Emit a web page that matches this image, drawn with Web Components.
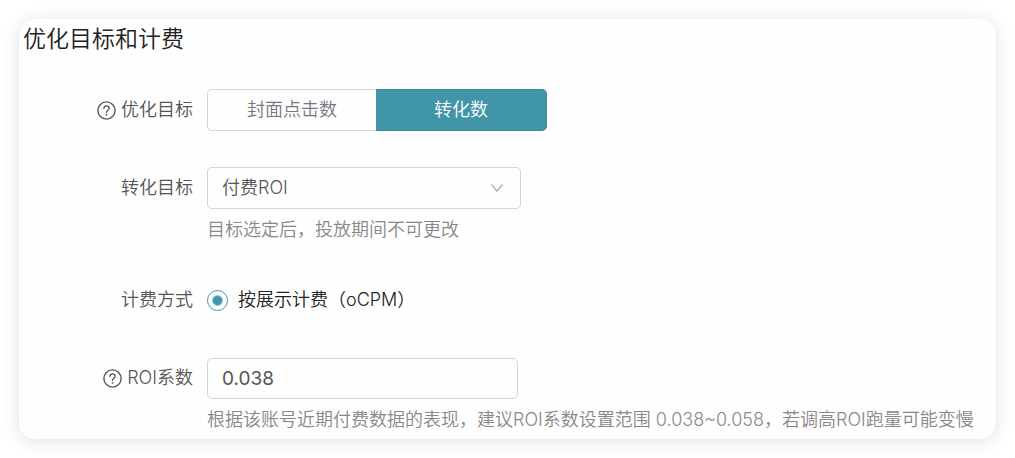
<!DOCTYPE html>
<html lang="zh-CN">
<head>
<meta charset="utf-8">
<meta name="viewport" content="width=device-width, initial-scale=1">
<title>优化目标和计费</title>
<style>
  body {
    margin: 0;
    padding: 19px;
    background: #fff;
    color: #555;
    font: 18px/26px Inter, "Noto Sans CJK SC", sans-serif;
    font-weight: 350;
    --accent: #4096a8;
    --line: #d4d4d4;
    --muted: #888;
  }
</style>
</head>
<body>
<settings-card heading="优化目标和计费">
  <form-row label="优化目标" help>
    <segment-switch options="封面点击数,转化数" selected="1"></segment-switch>
  </form-row>
  <form-row label="转化目标" note="目标选定后，投放期间不可更改">
    <select-box value="付费ROI" label="转化目标"></select-box>
  </form-row>
  <form-row label="计费方式">
    <radio-option name="billing">按展示计费（oCPM）</radio-option>
  </form-row>
  <form-row label="ROI系数" help note="根据该账号近期付费数据的表现，建议ROI系数设置范围 0.038~0.058，若调高ROI跑量可能变慢">
    <text-box value="0.038" label="ROI系数"></text-box>
  </form-row>
</settings-card>

<script>
class Base extends HTMLElement {
  connectedCallback() {
    if (this.shadowRoot) return;
    this.attachShadow({ mode: 'open' }).innerHTML = this.render();
    this.ready();
  }
  ready() {}
}

customElements.define('settings-card', class extends Base {
  render() {
    return `<style>
      :host { display: block; box-sizing: border-box; padding: 4px 4px 6px; border-radius: 16px;
        background: #fefefe; box-shadow: 0 2px 18px rgba(0,0,0,.12); }
      h2 { margin: 0 0 33px; font-size: 23px; line-height: 33px; font-weight: 350; color: #222; }
      .rows { display: grid; gap: 36px; }
    </style>
    <h2>${this.getAttribute('heading')}</h2>
    <div class="rows"><slot></slot></div>`;
  }
});

customElements.define('help-icon', class extends Base {
  render() {
    return `<style>
      :host { display: block; width: 19px; height: 19px; }
      svg { display: block; width: 100%; height: 100%; fill: none; stroke: currentColor; stroke-linecap: round; }
    </style>
    <svg viewBox="0 0 19 19" aria-hidden="true">
      <circle cx="9.5" cy="9.5" r="8.6" stroke-width="1.4"/>
      <path d="M6.9 7.4C6.9 5.8 8 4.9 9.5 4.9s2.6.9 2.6 2.3c0 1.9-2.6 2-2.6 4.1" stroke-width="1.3"/>
      <circle cx="9.5" cy="13.8" r=".9" fill="currentColor" stroke="none"/>
    </svg>`;
  }
});

customElements.define('form-row', class extends Base {
  render() {
    const note = this.getAttribute('note');
    return `<style>
      :host { display: grid; grid-template-columns: 170px minmax(0, 1fr); column-gap: 14px; }
      .label { display: flex; align-items: center; justify-content: flex-end; gap: 5px; height: 42px; }
      .field { display: flex; align-items: center; min-height: 42px; }
      .note { grid-column: 2; margin: 8px 0 0; color: var(--muted); }
    </style>
    <div class="label">${this.hasAttribute('help') ? '<help-icon></help-icon>' : ''}<span>${this.getAttribute('label')}</span></div>
    <div class="field"><slot></slot></div>
    ${note ? `<p class="note">${note}</p>` : ''}`;
  }
});

customElements.define('segment-switch', class extends Base {
  render() {
    const selected = Number(this.getAttribute('selected'));
    const buttons = this.getAttribute('options').split(',').map((text, i) =>
      `<button type="button" aria-pressed="${i === selected}">${text}</button>`).join('');
    return `<style>
      :host { display: grid; grid-template-columns: 169px 171px; }
      button { height: 42px; padding: 0; border: 1px solid var(--line); background: transparent;
        color: #777783; font: inherit; cursor: pointer; }
      button:first-of-type { border-right: 0; border-radius: 5px 0 0 5px; }
      button:last-of-type { border-left: 0; border-radius: 0 5px 5px 0; }
      button[aria-pressed="true"] { background: var(--accent); border-color: #398c9e; color: #fff; }
    </style>${buttons}`;
  }
  ready() {
    const buttons = this.shadowRoot.querySelectorAll('button');
    buttons.forEach(b => b.addEventListener('click', () =>
      buttons.forEach(o => o.setAttribute('aria-pressed', String(o === b)))));
  }
});

customElements.define('select-box', class extends Base {
  render() {
    return `<style>
      :host { display: grid; align-items: center; width: 314px; }
      select { grid-area: 1 / 1; appearance: none; box-sizing: border-box; width: 100%; height: 42px;
        padding: 0 40px 0 14px; border: 1px solid var(--line); border-radius: 5px;
        background: transparent; color: inherit; font: inherit; }
      svg { grid-area: 1 / 1; justify-self: end; width: 12px; height: 8px; margin-right: 18px;
        fill: none; stroke: #aaa; stroke-width: 1.2; pointer-events: none; }
    </style>
    <select aria-label="${this.getAttribute('label')}"><option>${this.getAttribute('value')}</option></select>
    <svg viewBox="0 0 12 8" aria-hidden="true"><path d="M.5 .5 6 7.2 11.5 .5"/></svg>`;
  }
});

customElements.define('radio-option', class extends Base {
  render() {
    return `<style>
      :host { display: block; color: #222; }
      label { display: flex; align-items: center; gap: 10px; }
      input { appearance: none; box-sizing: border-box; width: 21px; height: 21px; margin: 0;
        border: 1px solid #bbb; border-radius: 50%; }
      input:checked { border-color: var(--accent);
        background: radial-gradient(circle, var(--accent) 4px, transparent 6px); }
    </style>
    <label><input type="radio" name="${this.getAttribute('name')}" checked><span><slot></slot></span></label>`;
  }
});

customElements.define('text-box', class extends Base {
  render() {
    return `<style>
      :host { display: block; width: 311px; }
      input { display: block; box-sizing: border-box; width: 100%; height: 41px; padding: 0 14px;
        border: 1px solid var(--line); border-radius: 5px; background: transparent;
        color: inherit; font: 400 19px/26px Inter, sans-serif; }
    </style>
    <input type="text" inputmode="decimal" aria-label="${this.getAttribute('label')}" value="${this.getAttribute('value')}">`;
  }
});
</script>
</body>
</html>
